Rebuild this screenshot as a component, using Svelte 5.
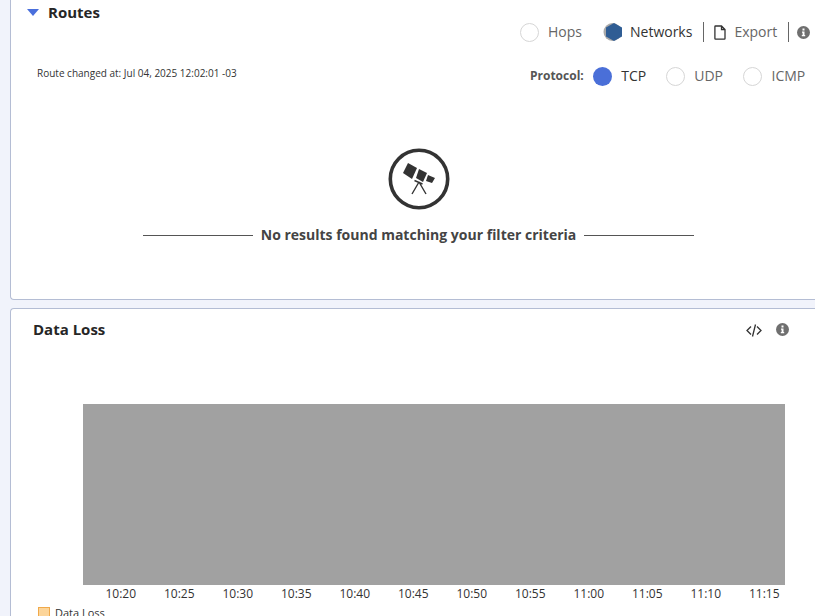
<script>
  const ticks = ['10:20','10:25','10:30','10:35','10:40','10:45','10:50','10:55','11:00','11:05','11:10','11:15'];
</script>

<div class="page">
  <section class="card routes">
    <div class="head">
      <span class="caret"></span>
      <h2>Routes</h2>
    </div>
    <div class="toolbar">
      <span class="radio"></span><span class="lbl muted hops">Hops</span>
      <svg class="hex" width="20" height="20" viewBox="0 0 20 20"><circle cx="9.500" cy="10" r="9" fill="#a9a9a9"/><path d="M11 1l8 4.500v9L11 19l-8-4.500v-9z" fill="#2f5d94"/></svg>
      <span class="lbl">Networks</span>
      <span class="sep s1"></span>
      <svg class="doc" width="12" height="15" viewBox="0 0 12 15"><path d="M1.500 1h6l3.500 3.500v9a.6.6 0 0 1-.6.600H1.500a.6.6 0 0 1-.6-.6V1.600A.6.6 0 0 1 1.500 1zM7.500 1v3.500H11" fill="none" stroke="#333" stroke-width="1.300"/></svg>
      <span class="lbl muted export">Export</span>
      <span class="sep s2"></span>
      <svg class="info" width="13" height="13" viewBox="0 0 13 13"><circle cx="6.500" cy="6.500" r="6.500" fill="#6f6f6f"/><path d="M5.500 2.500h2v2h-2zM5 5.500h2.500v3.500h.7v1.200H4.800V9h.8V6.700H5z" fill="#fff"/></svg>
    </div>
    <div class="subrow">
      <span class="changed">Route changed at: Jul 04, 2025 12:02:01 -03</span>
      <div class="protocol">
        <b>Protocol:</b>
        <span class="radio on"></span><span class="lbl tcp">TCP</span>
        <span class="radio"></span><span class="lbl muted udp">UDP</span>
        <span class="radio"></span><span class="lbl muted">ICMP</span>
      </div>
    </div>
    <div class="empty">
      <svg width="62" height="62" viewBox="0 0 62 62">
        <circle cx="31" cy="31" r="28.700" fill="none" stroke="#333" stroke-width="3.600"/>
        <g fill="#333">
          <path d="M20 15l9 5-5 11-9-6z"/>
          <path d="M31 21l8 4-4 9-7-4z"/>
          <path d="M40 27l7 3-3 5-6-2z"/>
        </g>
        <path d="M26.500 32.500l8 3.500M31 34l-7 12M31 34l7 12" fill="none" stroke="#333" stroke-width="1.400"/>
      </svg>
      <div class="msg">
        <span class="rule"></span>
        <strong>No results found matching your filter criteria</strong>
        <span class="rule"></span>
      </div>
    </div>
  </section>

  <section class="card loss">
    <div class="losshead">
      <h2>Data Loss</h2>
      <svg class="code" width="16" height="13" viewBox="0 0 16 13"><path d="M5 2.500L1 6.500l4 4M11 2.500l4 4-4 4M9.500 .5L6.500 12.500" fill="none" stroke="#333" stroke-width="1.300"/></svg>
      <svg class="info2" width="13" height="13" viewBox="0 0 13 13"><circle cx="6.500" cy="6.500" r="6.500" fill="#6f6f6f"/><path d="M5.500 2.500h2v2h-2zM5 5.500h2.500v3.500h.7v1.200H4.800V9h.8V6.700H5z" fill="#fff"/></svg>
    </div>
    <div class="plot"></div>
    <div class="axis">
      {#each ticks as t}<span>{t}</span>{/each}
    </div>
    <div class="legend"><span class="swatch"></span>Data Loss</div>
  </section>
</div>

<style>
  :global(body) { margin: 0; }
  .page {
    width: 815px; height: 616px; overflow: hidden; box-sizing: border-box;
    background: #f1f3fb; padding-left: 10px; display: flex; flex-direction: column; gap: 8px;
    font-family: "Open Sans", sans-serif; color: #333;
  }
  .card {
    background: #fff; border: 1px solid #b4bdd4; border-right: 0; box-sizing: border-box;
    border-radius: 4px 0 0 4px; flex: none;
  }
  .routes { height: 300px; border-top: 0; border-radius: 0 0 0 4px; }
  .head { display: flex; align-items: center; height: 24px; padding-left: 16px; }
  .caret {
    width: 0; height: 0; border-left: 6px solid transparent; border-right: 6px solid transparent;
    border-top: 7px solid #4a6fdc; margin-right: 9px; margin-top: 1px;
  }
  h2 { margin: 0; font-size: 15px; font-weight: 700; color: #262626; line-height: 24px; }
  .toolbar { display: flex; align-items: center; height: 24px; padding-left: 509px; margin-top: -4px; }
  .lbl { font-size: 14px; color: #333; line-height: 20px; }
  .muted { color: #666; }
  .radio {
    width: 17px; height: 17px; border-radius: 50%; border: 1px solid #d6d6d6; background: #fff; flex: none;
  }
  .radio.on { width: 19px; height: 19px; border: 0; background: #4a6fd8; }
  .hops { margin-left: 9px; margin-right: 21px; }
  .hex { margin-right: 7px; flex: none; }
  .sep { width: 1px; height: 20px; background: #666; flex: none; }
  .s1 { margin-left: 11px; margin-right: 10px; }
  .doc { flex: none; margin-right: 8px; }
  .export { margin-right: 11px; }
  .s2 { margin-right: 8px; }
  .subrow { display: flex; align-items: center; height: 24px; margin-top: 20px; justify-content: space-between; }
  .changed { font-size: 10px; color: #333; margin-left: 26px; margin-top: -6px; }
  .protocol { display: flex; align-items: center; width: 285px; flex: none; }
  .protocol b { font-size: 12px; color: #555; margin-right: 9px; margin-top: -2px; }
  .tcp { margin-left: 9.500px; margin-right: 19.500px; }
  .udp { margin-right: 20px; }
  .protocol .radio:not(.on) + .lbl { margin-left: 9.500px; }
  .empty { display: flex; flex-direction: column; align-items: center; margin-top: 60px; padding-left: 7px; }
  .empty svg { margin-left: 5px; }
  .msg { display: flex; align-items: center; gap: 8px; margin-top: 14px; height: 20px; width: 551px; margin-left: 4px; }
  .msg strong { font-size: 14px; font-weight: 700; color: #444; white-space: nowrap; }
  .rule { flex: 1; height: 1px; background: #555; margin-top: 2px; }
  .loss { height: 320px; border-bottom: 0; border-radius: 4px 0 0 0; position: relative; }
  .losshead { display: flex; align-items: center; height: 40px; padding: 0 26px 0 22px; }
  .losshead h2 { flex: 1; }
  .code { margin-right: 14px; margin-top: 2px; flex: none; }
  .info2 { margin-top: 1px; }
  .plot { height: 181px; margin: 55px 30px 0 72px; background: #a1a1a1; }
  .axis { display: flex; margin-left: 80.500px; width: 702px; justify-content: flex-start; }
  .axis span { width: 58.500px; flex: none; font-size: 12px; color: #333; text-align: center; line-height: 16px; margin-top: 1px; }
  .legend { display: flex; align-items: center; font-size: 11px; color: #333; margin: 4px 0 0 27px; line-height: 14px; }
  .swatch { width: 10px; height: 10px; background: #fcd59a; border: 1px solid #f0a94a; margin-right: 5px; }
</style>
